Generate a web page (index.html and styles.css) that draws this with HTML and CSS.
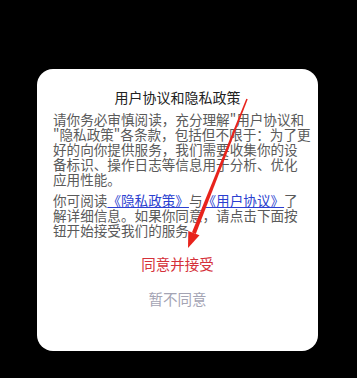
FILE: index.html
```html
<!DOCTYPE html>
<html lang="zh-CN">
<head>
    <meta charset="UTF-8">
    <meta name="viewport" content="width=device-width, initial-scale=1.0">
    <title>用户协议和隐私政策</title>
    <link rel="stylesheet" href="styles.css">
</head>
<body>

    <div class="dialog">
        <h1 class="titulo">用户协议和隐私政策</h1>
        <p class="texto">请你务必审慎阅读，充分理解"用户协议和<br>"隐私政策"各条款，包括但不限于：为了更<br>好的向你提供服务，我们需要收集你的设<br>备标识、操作日志等信息用于分析、优化<br>应用性能。</p>
        <p class="texto">你可阅读<a href="#">《隐私政策》</a>与<a href="#">《用户协议》</a>了<br>解详细信息。如果你同意，请点击下面按<br>钮开始接受我们的服务。</p>

        <div class="acciones">
            <button type="button" class="aceptar">同意并接受</button>
            <button type="button" class="rechazar">暂不同意</button>
        </div>
    </div>

    <!-- flecha roja encima del dialogo -->
    <svg class="flecha" width="357" height="378" viewBox="0 0 357 378">
        <polygon points="246.3,98.7 247.7,99.3 195.8,233.9 192,232.3" fill="#e8231c"/>
        <polygon points="188,248 199.5,235.3 188.3,230.9" fill="#e8231c"/>
    </svg>

</body>
</html>
```

FILE: styles.css
```css
body {
    margin: 0;
    background-color: #000;
    font-family: "Noto Sans CJK SC", "Noto Sans", sans-serif;
    width: 357px;
    height: 378px;
    overflow: hidden;
}

.dialog {
    background-color: #fff;
    width: 281px;
    height: 282px;
    margin: 69px 0 0 37px;
    padding: 20px 16px 0;
    box-sizing: border-box;
    border-radius: 16px;
}

.titulo {
    margin: 0 0 7px;
    font-size: 14px;
    line-height: 16px;
    font-weight: normal;
    text-align: center;
    color: #222;
}

.texto {
    margin: 0 0 6px;
    font-size: 13.6px;
    line-height: 15px;
    color: #5a5a5a;
    white-space: nowrap;
}

.texto a {
    color: #2b3fd0;
    text-decoration: underline;
}

.acciones {
    display: flex;
    flex-direction: column;
    align-items: center;
    gap: 15px;
    margin-top: 16px;
}

button {
    background: none;
    border: none;
    padding: 0;
    font-family: inherit;
    font-size: 14.5px;
    line-height: 20px;
    cursor: pointer;
}

.aceptar {
    color: #d5313a;
}

.rechazar {
    color: #a4a4b4;
}

.flecha {
    position: absolute;
    top: 0;
    left: 0;
    pointer-events: none;
}
```
